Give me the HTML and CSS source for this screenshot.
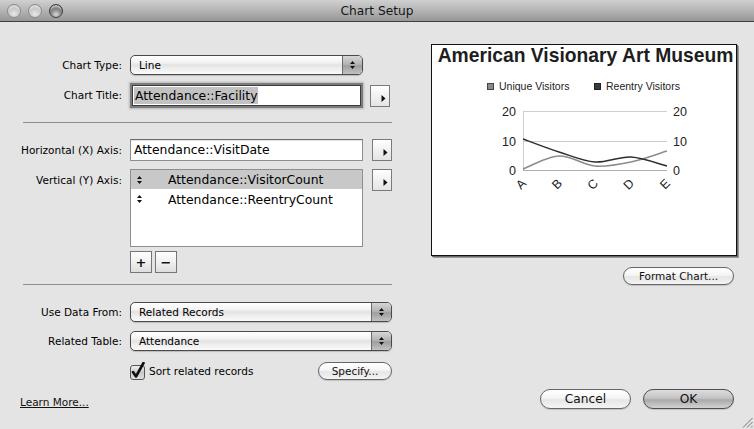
FILE: index.html
```html
<!DOCTYPE html>
<html>
<head>
<meta charset="utf-8">
<title>Chart Setup</title>
<link rel="stylesheet" href="styles.css">
</head>
<body>
<div class="window">
  <div class="titlebar">
    <div class="lights">
      <span class="light"></span>
      <span class="light"></span>
      <span class="light active"></span>
    </div>
    <div class="title">Chart Setup</div>
    <div class="spacer"></div>
  </div>

  <div class="main">
    <div class="left">
      <div class="row r-type">
        <span class="label">Chart Type:</span>
        <div class="popup w-short">
          <span class="popup-text">Line</span>
          <span class="stepper"><svg width="7" height="10" viewBox="0 0 7 10"><path d="M3.5 1 L6 4 L1 4 Z M1 6 L6 6 L3.5 9 Z" fill="#111"/></svg></span>
        </div>
      </div>

      <div class="row r-title">
        <span class="label">Chart Title:</span>
        <div class="field focus"><span class="sel">Attendance::Facility</span></div>
        <button class="arrow-btn"><svg width="5" height="7" viewBox="0 0 5 7"><path d="M0.5 0 L4.5 3.5 L0.5 7 Z" fill="#111"/></svg></button>
      </div>

      <div class="sep s1"></div>

      <div class="row r-x">
        <span class="label">Horizontal (X) Axis:</span>
        <div class="field">Attendance::VisitDate</div>
        <button class="arrow-btn"><svg width="5" height="7" viewBox="0 0 5 7"><path d="M0.5 0 L4.5 3.5 L0.5 7 Z" fill="#111"/></svg></button>
      </div>

      <div class="row r-y">
        <span class="label">Vertical (Y) Axis:</span>
        <div class="list">
          <div class="list-row selected">
            <svg class="updown" width="5" height="8" viewBox="0 0 5 8"><path d="M2.5 0 L5 3 L0 3 Z M0 5 L5 5 L2.5 8 Z" fill="#111"/></svg>
            <span>Attendance::VisitorCount</span>
          </div>
          <div class="list-row">
            <svg class="updown" width="5" height="8" viewBox="0 0 5 8"><path d="M2.5 0 L5 3 L0 3 Z M0 5 L5 5 L2.5 8 Z" fill="#111"/></svg>
            <span>Attendance::ReentryCount</span>
          </div>
        </div>
        <button class="arrow-btn"><svg width="5" height="7" viewBox="0 0 5 7"><path d="M0.5 0 L4.5 3.5 L0.5 7 Z" fill="#111"/></svg></button>
      </div>

      <div class="row r-pm">
        <span class="label"></span>
        <button class="sq-btn">+</button>
        <button class="sq-btn">−</button>
      </div>

      <div class="sep s2"></div>

      <div class="row r-use">
        <span class="label">Use Data From:</span>
        <div class="popup w-long">
          <span class="popup-text">Related Records</span>
          <span class="stepper"><svg width="7" height="10" viewBox="0 0 7 10"><path d="M3.5 1 L6 4 L1 4 Z M1 6 L6 6 L3.5 9 Z" fill="#111"/></svg></span>
        </div>
      </div>

      <div class="row r-rel">
        <span class="label">Related Table:</span>
        <div class="popup w-long">
          <span class="popup-text">Attendance</span>
          <span class="stepper"><svg width="7" height="10" viewBox="0 0 7 10"><path d="M3.5 1 L6 4 L1 4 Z M1 6 L6 6 L3.5 9 Z" fill="#111"/></svg></span>
        </div>
      </div>

      <div class="row r-sort">
        <span class="label"></span>
        <span class="checkbox">
          <svg width="16" height="18" viewBox="0 0 16 18">
            <defs>
              <linearGradient id="cbg" x1="0" y1="0" x2="0" y2="1">
                <stop offset="0" stop-color="#f4f4f4"/>
                <stop offset="0.5" stop-color="#c9c9c9"/>
                <stop offset="1" stop-color="#e2e2e2"/>
              </linearGradient>
            </defs>
            <rect x="0.5" y="3.5" width="14" height="14" rx="2.5" fill="url(#cbg)" stroke="#555"/>
            <path d="M3 10 L6 14.5 L13.5 1" fill="none" stroke="#111" stroke-width="2.6" stroke-linecap="round" stroke-linejoin="round"/>
          </svg>
        </span>
        <span class="check-label">Sort related records</span>
        <button class="push specify">Specify...</button>
      </div>
    </div>

    <div class="right">
      <div class="preview">
        <svg class="chart" width="304" height="210" viewBox="0 0 304 210">
          <text class="c-title" x="153.5" y="17" text-anchor="middle">American Visionary Art Museum</text>
          <rect x="55.5" y="38.5" width="6" height="6" fill="#8a8a8a" stroke="#444"/>
          <text class="c-legend" x="67" y="45">Unique Visitors</text>
          <rect x="162.5" y="38.5" width="6" height="6" fill="#3a3a3a" stroke="#222"/>
          <text class="c-legend" x="174" y="45">Reentry Visitors</text>

          <line x1="91" y1="66.5" x2="235" y2="66.5" stroke="#cfcfcf"/>
          <line x1="91" y1="96.5" x2="235" y2="96.5" stroke="#cfcfcf"/>
          <line x1="91.5" y1="66.5" x2="91.5" y2="126" stroke="#cfcfcf"/>
          <line x1="91" y1="125.5" x2="235" y2="125.5" stroke="#b0b0b0"/>

          <text class="c-axis" x="84" y="71" text-anchor="end">20</text>
          <text class="c-axis" x="84" y="100.5" text-anchor="end">10</text>
          <text class="c-axis" x="84" y="130" text-anchor="end">0</text>
          <text class="c-axis" x="241" y="71">20</text>
          <text class="c-axis" x="241" y="100.5">10</text>
          <text class="c-axis" x="241" y="130">0</text>

          <path d="M91,124 C97,121.8 115,111.5 127,111 C139,110.5 151,120 163,121 C175,122 187,119.5 199,117 C211,114.5 229,107.8 235,106" fill="none" stroke="#8c8c8c" stroke-width="1.5"/>
          <path d="M91,94 C97,96.2 115,103.2 127,107 C139,110.8 151,116.2 163,117 C175,117.8 187,111.3 199,112 C211,112.7 229,119.5 235,121" fill="none" stroke="#2e2e2e" stroke-width="1.5"/>

          <text class="c-axis" text-anchor="end" transform="translate(95,139) rotate(-45)">A</text>
          <text class="c-axis" text-anchor="end" transform="translate(131,139) rotate(-45)">B</text>
          <text class="c-axis" text-anchor="end" transform="translate(167,139) rotate(-45)">C</text>
          <text class="c-axis" text-anchor="end" transform="translate(203,139) rotate(-45)">D</text>
          <text class="c-axis" text-anchor="end" transform="translate(239,139) rotate(-45)">E</text>
        </svg>
      </div>
      <div class="fmt-row">
        <button class="push fmt">Format Chart...</button>
      </div>
    </div>
  </div>

  <div class="footer">
    <a class="learn" href="#">Learn More...</a>
    <div class="btns">
      <button class="push big">Cancel</button>
      <button class="push big default">OK</button>
    </div>
  </div>

  <svg class="grip" width="11" height="11" viewBox="0 0 11 11">
    <path d="M10.5 1 L1 10.5 M10.5 5 L5 10.5 M10.5 9 L9 10.5" stroke="#777" stroke-width="1"/>
  </svg>
</div>
</body>
</html>
```
FILE: styles.css
```css
html, body {
  margin: 0;
  padding: 0;
}

body {
  width: 754px;
  height: 429px;
  overflow: hidden;
  background: #e4e4e4;
  font-family: "DejaVu Sans", "Liberation Sans", sans-serif;
  font-size: 10.5px;
  color: #000;
}

.window {
  position: relative;
  width: 754px;
  height: 429px;
  display: flex;
  flex-direction: column;
}

/* Title bar */
.titlebar {
  height: 21px;
  flex: none;
  border-bottom: 1px solid #404040;
  background: linear-gradient(to bottom, #d0d0d0 0%, #b4b4b4 50%, #969696 100%);
  display: grid;
  grid-template-columns: 1fr auto 1fr;
  align-items: center;
}

.lights {
  display: flex;
  gap: 7px;
  padding-left: 7px;
}

.light {
  width: 14px;
  height: 14px;
  box-sizing: border-box;
  border-radius: 50%;
  border: 1px solid #8a8a8a;
  background: radial-gradient(circle at 50% 75%, #e8e8e8 0%, #c4c4c4 55%, #a9a9a9 100%);
  box-shadow: inset 0 2px 2px rgba(255,255,255,.6);
}

.light.active {
  border-color: #3c3c3c;
  background: radial-gradient(circle at 50% 80%, #d8d8d8 0%, #8a8a8a 45%, #3c3c3c 100%);
  box-shadow: inset 0 3px 2px -1px rgba(255,255,255,.7);
}

.title {
  font-size: 12.2px;
  color: #161616;
}

/* Main */
.main {
  display: flex;
  height: 367px;
  flex: none;
}

.left {
  width: 392px;
  flex: none;
}

.right {
  flex: 1;
}

.row {
  display: flex;
  align-items: center;
}

.label {
  width: 122px;
  margin-right: 8px;
  text-align: right;
  flex: none;
  font-size: 10.5px;
}

.r-type { margin-top: 33px; height: 20px; }
.r-title { margin-top: 8px; height: 24px; }
.s1 { margin-top: 15px; }
.r-x { margin-top: 16px; height: 22px; }
.r-y { margin-top: 8px; align-items: flex-start; }
.r-pm { margin-top: 4px; }
.s2 { margin-top: 11px; }
.r-use { margin-top: 17px; }
.r-rel { margin-top: 9px; }
.r-sort { margin-top: 11px; height: 18px; }

.r-y .label {
  margin-top: 5px;
}

.sep {
  height: 1px;
  margin-left: 23px;
  background: #8e8e8e;
}

/* Popup button */
.popup {
  display: flex;
  align-items: center;
  height: 20px;
  box-sizing: border-box;
  border: 1px solid #4a4a4a;
  border-radius: 5px;
  overflow: hidden;
  background: linear-gradient(to bottom, #ffffff 0%, #f4f4f4 35%, #e3e3e3 50%, #eeeeee 70%, #fafafa 100%);
  box-shadow: 0 1px 1px rgba(0,0,0,.18);
}

.w-short { width: 233px; }
.w-long { width: 262px; }

.popup-text {
  flex: 1;
  padding-left: 8px;
  font-size: 10.5px;
}

.stepper {
  width: 19px;
  align-self: stretch;
  border-left: 1px solid #6a6a6a;
  background: linear-gradient(to bottom, #d6d6d6 0%, #b4b4b4 45%, #9e9e9e 55%, #c2c2c2 100%);
  display: flex;
  align-items: center;
  justify-content: center;
}

/* Text fields */
.field {
  width: 233px;
  height: 22px;
  box-sizing: border-box;
  border: 1px solid #8e8e8e;
  border-top-color: #6c6c6c;
  background: #fff;
  box-shadow: inset 0 1px 1px rgba(0,0,0,.12);
  font-size: 12.4px;
  line-height: 20px;
  padding-left: 3px;
  white-space: nowrap;
  overflow: hidden;
}

.field.focus {
  width: 229px;
  height: 21px;
  margin: 0 2px;
  border: 1px solid #3c3c3c;
  box-shadow: 0 0 0 2px #7c7c7c, 0 0 2px 3px rgba(0,0,0,.2);
  line-height: 19px;
  padding-left: 1px;
}

.sel {
  background: #c2c2c2;
  display: inline-block;
  line-height: 17px;
  padding: 0 1px;
}

/* Arrow square buttons */
.arrow-btn {
  width: 20px;
  height: 22px;
  margin-left: 9px;
  margin-right: 0;
  padding: 0 3px 4px 0;
  box-sizing: border-box;
  border: 1px solid #7a7a7a;
  background: linear-gradient(to bottom, #ffffff 0%, #f1f1f1 50%, #e4e4e4 100%);
  display: flex;
  align-items: flex-end;
  justify-content: flex-end;
  flex: none;
}

.r-title .arrow-btn { margin-left: 7px; margin-top: 2px; }

/* List */
.list {
  width: 233px;
  height: 78px;
  box-sizing: border-box;
  border: 1px solid #8e8e8e;
  background: #fff;
}

.list-row {
  height: 20px;
  display: flex;
  align-items: center;
  font-size: 12.4px;
}

.list-row.selected {
  background: #c8c8c8;
  height: 19px;
}

.updown {
  margin-left: 6px;
  margin-right: 26px;
  flex: none;
}

/* +/- */
.sq-btn {
  width: 22px;
  height: 22px;
  box-sizing: border-box;
  padding: 0;
  margin-right: 3px;
  border: 1px solid #767676;
  background: linear-gradient(to bottom, #ffffff 0%, #f0f0f0 50%, #dedede 100%);
  font-family: "DejaVu Sans", sans-serif;
  font-weight: bold;
  font-size: 13px;
  line-height: 19px;
  color: #111;
}

/* Checkbox row */
.checkbox {
  width: 16px;
  height: 18px;
  display: block;
}

.check-label {
  margin-left: 3px;
  font-size: 10.5px;
}

/* Push buttons */
.push {
  height: 18px;
  box-sizing: border-box;
  padding: 0;
  border: 1px solid #666;
  border-radius: 9px;
  background: linear-gradient(to bottom, #ffffff 0%, #f5f5f5 45%, #e6e6e6 55%, #f4f4f4 100%);
  box-shadow: 0 1px 1px rgba(0,0,0,.15);
  font-family: "DejaVu Sans", sans-serif;
  font-size: 10.5px;
  color: #111;
  line-height: 16px;
}

.specify {
  margin-left: auto;
  width: 74px;
}

.fmt {
  width: 111px;
}

.big {
  width: 91px;
  height: 20px;
  border-radius: 10px;
  font-size: 12.2px;
  line-height: 18px;
}

.default {
  border-color: #4e4e4e;
  background: linear-gradient(to bottom, #dcdcdc 0%, #c4c4c4 45%, #aaaaaa 55%, #d2d2d2 100%);
}

/* Right side */
.preview {
  width: 306px;
  height: 212px;
  box-sizing: border-box;
  margin-left: 39px;
  margin-top: 22px;
  border: 1px solid #111;
  background: #fff;
  box-shadow: 1px 1px 0 #6a6a6a, 2px 2px 0 #9a9a9a;
}

.chart {
  display: block;
}

.c-title {
  font-family: "Liberation Sans", Arial, sans-serif;
  font-weight: bold;
  font-size: 19.3px;
  fill: #1e1e1e;
}

.c-legend {
  font-family: "Liberation Sans", Arial, sans-serif;
  font-size: 10.5px;
  fill: #222;
}

.c-axis {
  font-family: "Liberation Sans", Arial, sans-serif;
  font-size: 12.5px;
  fill: #222;
}

.fmt-row {
  display: flex;
  justify-content: flex-end;
  margin-top: 11px;
  padding-right: 20px;
}

/* Footer */
.footer {
  height: 20px;
  display: flex;
  align-items: center;
  padding: 0 20px 0 20px;
}

.learn {
  font-size: 10.5px;
  color: #111;
  text-decoration: underline;
  padding-top: 5px;
}

.btns {
  margin-left: auto;
  display: flex;
  gap: 12px;
}

.grip {
  position: absolute;
  right: 1px;
  bottom: 1px;
}
```
